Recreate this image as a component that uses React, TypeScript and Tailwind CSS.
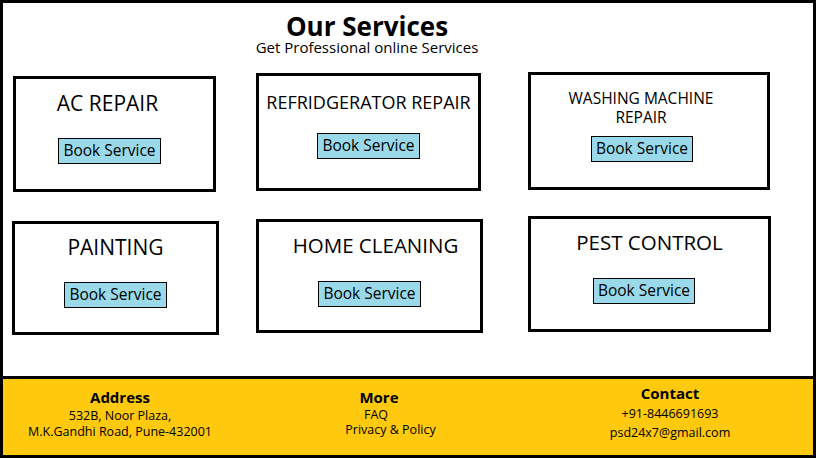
type Service = {
  title: string[];
  box: string;
  pad: string;
  text: string;
  titleShift: string;
  btn: string;
};

const rows: Service[][] = [
  [
    { title: ["AC REPAIR"], box: "ml-[10px] mt-[4px] w-[203px] h-[116px]", pad: "pt-[12px]", text: "text-[21px]", titleShift: "pr-[14px]", btn: "mt-[22px] mr-[10px]" },
    { title: ["REFRIDGERATOR REPAIR"], box: "ml-[40px] mt-[1px] w-[225px] h-[118px]", pad: "pt-[16px]", text: "text-[18px]", titleShift: "", btn: "mt-[19px]" },
    { title: ["WASHING MACHINE", "REPAIR"], box: "ml-[47px] mt-0 w-[242px] h-[118px]", pad: "pt-[14px]", text: "text-[15.5px]", titleShift: "pr-[16px]", btn: "mt-[10px] mr-[14px]" },
  ],
  [
    { title: ["PAINTING"], box: "ml-[9px] mt-[5px] w-[207px] h-[114px]", pad: "pt-[11px]", text: "text-[21px]", titleShift: "", btn: "mt-[22px]" },
    { title: ["HOME CLEANING"], box: "ml-[37px] mt-[3px] w-[227px] h-[114px]", pad: "pt-[11px]", text: "text-[20.5px]", titleShift: "pl-[12px]", btn: "mt-[23px]" },
    { title: ["PEST CONTROL"], box: "ml-[45px] mt-0 w-[243px] h-[116px]", pad: "pt-[11px]", text: "text-[20.5px]", titleShift: "", btn: "mt-[23px] mr-[11px]" },
  ],
];

function ServiceCard({ s }: { s: Service }) {
  return (
    <div className={`${s.box} ${s.pad} flex shrink-0 flex-col items-center border-[3px] border-black`}>
      <div className={`${s.text} ${s.titleShift} text-center leading-[1.2]`}>
        {s.title.map((line) => (
          <div key={line}>{line}</div>
        ))}
      </div>
      <button className={`${s.btn} flex h-[26px] items-center border border-black bg-[#99d9ea] px-[4px] text-[15.5px] leading-none`}>
        Book Service
      </button>
    </div>
  );
}

export default function App() {
  return (
    <div
      className="flex h-[458px] w-[816px] flex-col border-[3px] border-black bg-white text-black"
      style={{ fontFamily: '"Open Sans", "Noto Sans", sans-serif' }}
    >
      <main className="flex-1">
        <div className="w-[728px] pt-[9px] text-center">
          <h1 className="text-[26px] font-bold leading-[28px]">Our Services</h1>
          <p className="text-[15px] leading-[15px]">Get Professional online Services</p>
        </div>

        <div className="mt-[17px] flex items-start">
          {rows[0].map((s) => (
            <ServiceCard key={s.title.join(" ")} s={s} />
          ))}
        </div>

        <div className="mt-[24px] flex items-start">
          {rows[1].map((s) => (
            <ServiceCard key={s.title.join(" ")} s={s} />
          ))}
        </div>
      </main>

      <footer className="flex h-[79px] shrink-0 border-t-[3px] border-black bg-[#ffc90e]">
        <div className="w-[234px] pt-[9px] text-center text-[12.5px] leading-[16px]">
          <h2 className="mb-[2px] text-[15px] font-bold leading-[18px]">Address</h2>
          <p>532B, Noor Plaza,</p>
          <p>M.K.Gandhi Road, Pune-432001</p>
        </div>
        <div className="ml-[35px] w-[214px] pt-[9px] text-center text-[12.5px] leading-[15px]">
          <h2 className="mb-[1px] text-[15px] font-bold leading-[18px]">More</h2>
          <p className="pr-[6px]">FAQ</p>
          <p className="pl-[23px]">Privacy &amp; Policy</p>
        </div>
        <div className="ml-[77px] w-[214px] pt-[5px] text-center text-[12.5px] leading-[19px]">
          <h2 className="mb-[2px] text-[15px] font-bold leading-[18px]">Contact</h2>
          <p>+91-8446691693</p>
          <p>psd24x7@gmail.com</p>
        </div>
      </footer>
    </div>
  );
}
